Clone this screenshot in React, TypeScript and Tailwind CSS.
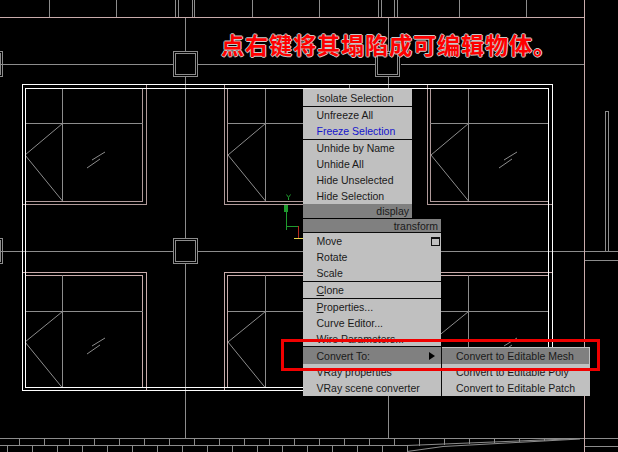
const GRAY = "#8c8c8c";
const PINK = "#c9abab";
const PINK_DIM = "#b09a9a";
const WHITE = "#ffffff";

type L = [number, number, number, number];

const grayLines: L[] = [
  [49.5, 0, 49.5, 17], [116.5, 0, 116.5, 17], [175.5, 0, 175.5, 17], [178.5, 0, 178.5, 17],
  [192.5, 0, 192.5, 17], [194.5, 0, 194.5, 17], [252.5, 0, 252.5, 17], [319.5, 0, 319.5, 17],
  [378.5, 0, 378.5, 17], [381.5, 0, 381.5, 17], [394.5, 0, 394.5, 17], [397.5, 0, 397.5, 17],
  [459.5, 0, 459.5, 17], [526.5, 0, 526.5, 17],
  [185.5, 17, 185.5, 51], [388.5, 17, 388.5, 51],
  [185.5, 77, 185.5, 238], [185.5, 263, 185.5, 438],
  [388.5, 76, 388.5, 88], [388.5, 391, 388.5, 438], [349.5, 84, 349.5, 88],
  [0, 64.5, 173, 64.5], [198, 64.5, 375, 64.5], [401, 64.5, 584, 64.5],
  [0, 251.5, 173, 251.5], [198, 251.5, 375, 251.5], [401, 251.5, 618, 251.5],
  [585, 260.5, 618, 260.5],
  [605.5, 111, 605.5, 251], [608.5, 111, 608.5, 251], [605, 111.5, 609, 111.5],
  [0, 438.5, 618, 438.5], [0, 445.5, 407, 445.5],
  [585, 446.5, 618, 446.5],
];

function Room({ x, vx, ox, y, rx }: { x: number; vx: number; ox: number; y: number; rx: number }) {
  const top = y === 0;
  const hy = top ? 123.5 : 311.5;
  const t = top ? 88 : 275;
  const b = top ? 201 : 388;
  const mid = top ? 155 : 342;
  return (
    <g fill="none" stroke={GRAY}>
      <path d={`M${vx + 0.5} ${t}V${b}M${x} ${hy}H${rx}`} shapeRendering="crispEdges" />
      <path d={`M${vx + 0.5} ${hy}L${ox} ${mid}L${vx + 0.5} ${b}`} />
    </g>
  );
}

function Ticks({ x, y }: { x: number; y: number }) {
  return (
    <path
      d={`M${x + 5} ${y + 8}L${x + 18} ${y}M${x} ${y + 16}L${x + 13} ${y + 7}`}
      fill="none"
      stroke={GRAY}
    />
  );
}

function Column({ x, y }: { x: number; y: number }) {
  return (
    <g fill="none" stroke={GRAY} shapeRendering="crispEdges">
      <rect x={x + 0.5} y={y + 0.5} width={24} height={25} />
      <rect x={x + 2.5} y={y + 2.5} width={20} height={21} />
    </g>
  );
}

function Drawing() {
  const topTicks = Array.from({ length: 23 }, (_, i) => 19.5 + i * 25);
  const botTicks = Array.from({ length: 17 }, (_, i) => 7.5 + i * 25);
  return (
    <svg className="absolute inset-0" width={618} height={452} viewBox="0 0 618 452">
      <g stroke={GRAY} strokeWidth={1} shapeRendering="crispEdges" fill="none">
        {grayLines.map(([a, b, c, d], i) => (
          <line key={i} x1={a} y1={b} x2={c} y2={d} />
        ))}
        {topTicks.map((x) => (
          <line key={x} x1={x} y1={438} x2={x} y2={x > 400 ? 446 - (x - 407) * 0.04 : 445} />
        ))}
        {botTicks.map((x) => (
          <line key={x} x1={x} y1={445} x2={x} y2={452} />
        ))}
      </g>
      <path d="M407 445.5L580 438.5M407 451.5L443 446.5L580 439" fill="none" stroke={GRAY} />

      <path d="M0 17.5H585M584.5 0V452" fill="none" stroke={PINK} shapeRendering="crispEdges" />

      <Column x={173} y={51} />
      <Column x={375} y={51} />
      <Column x={173} y={238} />
      <Column x={375} y={238} />
      <Column x={-22} y={51} />
      <Column x={-22} y={238} />

      <g fill="none" stroke={PINK_DIM} shapeRendering="crispEdges">
        <path d="M146.5 84V204.5H22M142.5 88V201.5H25" />
        <path d="M224.5 84V204.5H303M227.5 88V201.5H303" />
        <path d="M427.5 84V204.5H553M430.5 88V201.5H549" />
      </g>
      <g fill="none" stroke={PINK} shapeRendering="crispEdges">
        <path d="M22 272.5H146.5V391M25 275.5H142.5V388" />
        <path d="M303 272.5H224.5V391M303 275.5H227.5V388" />
        <path d="M441 272.5H553M441 275.5H549" />
      </g>

      <Room x={25} vx={62} ox={25} y={0} rx={143} />
      <Room x={228} vx={265} ox={228} y={0} rx={303} />
      <Room x={430} vx={468} ox={431} y={0} rx={549} />
      <Room x={25} vx={62} ox={25} y={1} rx={143} />
      <Room x={228} vx={265} ox={228} y={1} rx={303} />
      <Room x={430} vx={468} ox={431} y={1} rx={549} />

      <Ticks x={87} y={152} />
      <Ticks x={499} y={152} />
      <Ticks x={87} y={338} />
      <Ticks x={499} y={338} />

      <g fill="none" stroke={WHITE} shapeRendering="crispEdges">
        <rect x={22.5} y={84.5} width={530} height={306} />
        <rect x={25.5} y={88.5} width={523} height={299} />
      </g>

      <g fill="none" shapeRendering="crispEdges">
        <path d="M286.5 207V230M286 226.5H298.5" stroke="#1f9a2e" />
        <rect x={284} y={205} width={4} height={7} fill="#1f9a2e" />
        <path d="M298.5 226V238" stroke="#b52a1e" />
        <path d="M294 238.5H303" stroke="#e6d84a" />
      </g>
      <path d="M286.5 194.5L288.5 197.5L290.5 194.5M288.5 197.5V200" fill="none" stroke="#1f9a2e" />
    </svg>
  );
}

function Row({ label, className = "" }: { label: React.ReactNode; className?: string }) {
  return <div className={`flex h-4 items-center pl-[13.5px] ${className}`}>{label}</div>;
}

const Sep = () => <div className="h-px bg-[#0a0a0a]" />;

function ContextMenu() {
  return (
    <div className="absolute left-[303px] top-[89px] w-[138px] font-['Liberation_Sans',sans-serif] text-[10.5px] leading-4 text-[#1a1a1a]">
      <div className="w-[109px] bg-[#c0c0c0]">
        <div className="pt-px">
          <Row label="Isolate Selection" />
        </div>
        <Sep />
        <Row label="Unfreeze All" />
        <Row label="Freeze Selection" className="text-[#1414cc]" />
        <Sep />
        <Row label="Unhide by Name" />
        <Row label="Unhide All" />
        <Row label="Hide Unselected" />
        <Row label="Hide Selection" />
        <div className="flex h-[14px] items-center justify-end bg-[#808080] pr-[3px]">display</div>
      </div>
      <div className="h-px w-[109px]" />
      <div className="flex h-[13px] items-center justify-end bg-[#808080] pr-[3px]">transform</div>
      <div className="h-px bg-[#0a0a0a]" />
      <div className="bg-[#c0c0c0]">
        <div className="relative">
          <Row label="Move" />
          <div className="absolute right-px top-[4px] h-[9px] w-[9px] border border-t-2 border-[#111]" />
        </div>
        <Row label="Rotate" />
        <Row label="Scale" />
        <Sep />
        <Row label={<span><u>C</u>lone</span>} />
        <Sep />
        <Row label={<span><u>P</u>roperties...</span>} />
        <Row label="Curve Editor..." />
        <div className="flex h-[15px] items-center pl-[13.5px]">Wire Parameters...</div>
        <Sep />
        <div className="relative flex h-[17px] items-center bg-[#808080] pl-[13.5px]">
          Convert To:
          <div className="absolute left-[126px] top-[5px] h-0 w-0 border-y-[4.5px] border-l-[6px] border-y-transparent border-l-black" />
        </div>
        <Row label="VRay properties" />
        <Row label="VRay scene converter" />
      </div>
      <div className="absolute left-[138px] top-[258px] h-[49px] w-[149px] border-l border-[#0a0a0a] bg-[#c0c0c0] pt-px">
        <div className="mr-px flex h-4 items-center bg-[#808080] pl-[14px]">Convert to Editable Mesh</div>
        <div className="flex h-4 items-center pl-[14px]">Convert to Editable Poly</div>
        <div className="flex h-4 items-center pl-[14px]">Convert to Editable Patch</div>
      </div>
    </div>
  );
}

export default function App() {
  return (
    <div className="relative h-[452px] w-[618px] overflow-hidden bg-black">
      <Drawing />
      <div className="absolute left-[221px] top-[27px] whitespace-nowrap font-['Noto_Sans_CJK_SC',sans-serif] text-[23px] font-bold leading-[34px] tracking-[1px] text-[#ff0000] [text-shadow:1px_0_0_#c8c8c8,-1px_0_0_#c8c8c8,0_1px_0_#c8c8c8,0_-1px_0_#c8c8c8]">
        点右键将其塌陷成可编辑物体。
      </div>
      <ContextMenu />
      <div className="absolute left-[281px] top-[339px] h-[32px] w-[319px] border-[3px] border-[#f00000]" />
    </div>
  );
}
